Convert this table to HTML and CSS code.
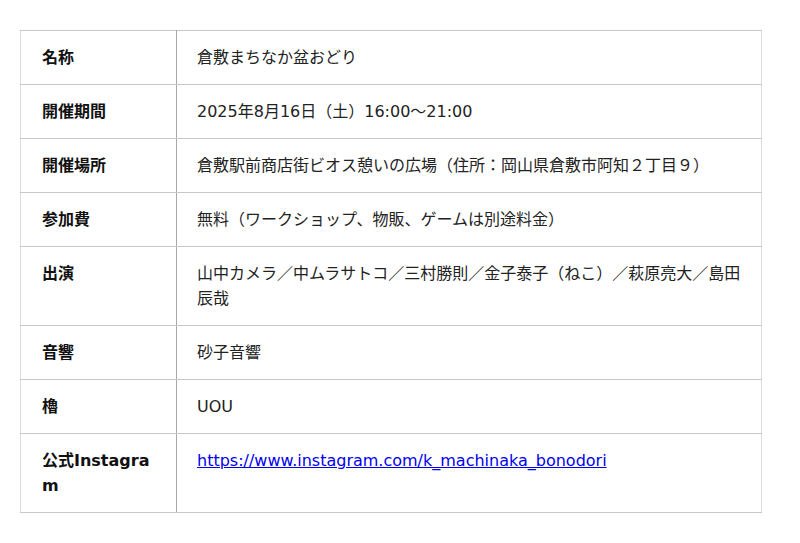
FILE: index.html
```html
<!DOCTYPE html>
<html lang="ja">
<head>
<meta charset="utf-8">
<link rel="stylesheet" href="styles.css">
</head>
<body>
<div class="wrap">
<table class="info">
<colgroup><col class="c-label"><col class="c-value"></colgroup>
<tbody>
<tr><th>名称</th><td>倉敷まちなか盆おどり</td></tr>
<tr><th>開催期間</th><td>2025年8月16日（土）16:00〜21:00</td></tr>
<tr><th>開催場所</th><td>倉敷駅前商店街ビオス憩いの広場（住所：岡山県倉敷市阿知２丁目９）</td></tr>
<tr><th>参加費</th><td>無料（ワークショップ、物販、ゲームは別途料金）</td></tr>
<tr><th>出演</th><td>山中カメラ／中ムラサトコ／三村勝則／金子泰子（ねこ）／萩原亮大／島田辰哉</td></tr>
<tr><th>音響</th><td>砂子音響</td></tr>
<tr><th>櫓</th><td>UOU</td></tr>
<tr><th>公式Instagram</th><td><a href="#">https://www.instagram.com/k_machinaka_bonodori</a></td></tr>
</tbody>
</table>
</div>
</body>
</html>
```

FILE: styles.css
```css
html, body {
  margin: 0;
  padding: 0;
  background: #fff;
}
body {
  font-family: "DejaVu Sans", "Noto Sans CJK JP", sans-serif;
  font-size: 16px;
  color: #222;
}
.wrap {
  padding: 30px 38px 30px 20px;
}
.info {
  width: 742px;
  border-collapse: collapse;
  table-layout: fixed;
  border: 1px solid #dcdcdc;
}
.c-label { width: 156px; }
.info th, .info td {
  padding: 14px 20px;
  line-height: 25px;
  text-align: left;
  vertical-align: top;
  border-top: 1px solid #c8c8c8;
  border-bottom: 1px solid #c8c8c8;
}
.info th {
  font-weight: bold;
  color: #111;
  border-right: 1px solid #a8a8a8;
  word-break: break-all;
  padding-left: 21px;
}
.info td {
  word-break: break-all;
}
.info a {
  color: #0000ee;
  text-decoration: underline;
}
```
